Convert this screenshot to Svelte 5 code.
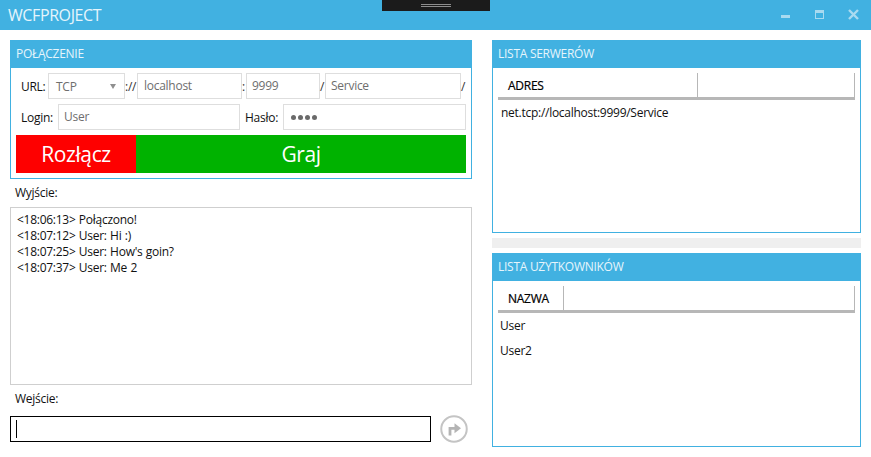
<script>
  const log = ['<18:06:13> Połączono!', '<18:07:12> User: Hi :)', "<18:07:25> User: How's goin?", '<18:07:37> User: Me 2'];
</script>

<div class="win">
  <header class="title">
    <span class="name">WCFPROJECT</span>
    <div class="controls">
      <svg width="11" height="11" viewBox="0 0 11 11"><rect x="1" y="6" width="9" height="3" fill="#a9daf0"/></svg>
      <svg width="11" height="11" viewBox="0 0 11 11"><rect x="1.5" y="1.5" width="8" height="8" fill="none" stroke="#a9daf0"/><rect x="1" y="1" width="9" height="3" fill="#a9daf0"/></svg>
      <svg width="11" height="11" viewBox="0 0 11 11"><path d="M1 1l9 9M10 1l-9 9" stroke="#a9daf0" stroke-width="2.4" fill="none"/></svg>
    </div>
  </header>
  <div class="notch"><i></i><i></i></div>

  <main>
    <section class="left">
      <div class="panel conn">
        <h2>POŁĄCZENIE</h2>
        <div class="form">
          <div class="row r1">
            <label for="proto" class="lurl">URL:</label>
            <div class="select" id="proto">TCP<span class="caret"></span></div>
            <span class="sep s1">://</span>
            <div class="field host">localhost</div>
            <span class="sep s2">:</span>
            <div class="field port">9999</div>
            <span class="sep s3">/</span>
            <div class="field svc">Service</div>
            <span class="sep s4">/</span>
          </div>
          <div class="row r2">
            <span class="llogin">Login:</span>
            <div class="field login">User</div>
            <span class="lpass">Hasło:</span>
            <div class="field pass"><b></b><b></b><b></b><b></b></div>
          </div>
          <div class="btns">
            <div class="btn red">Rozłącz</div>
            <div class="btn green">Graj</div>
          </div>
        </div>
      </div>

      <div class="cap out">Wyjście:</div>
      <div class="log">
        {#each log as line}<div>{line}</div>{/each}
      </div>
      <div class="cap in">Wejście:</div>
      <div class="send">
        <div class="input"><span class="cursor"></span></div>
        <svg class="go" width="28" height="28" viewBox="0 0 28 28">
          <circle cx="14" cy="14" r="12.75" fill="#fff" stroke="#c4c4c4" stroke-width="2"/>
          <path d="M10 20.5v-7.2h5.5" fill="none" stroke="#b4b4b4" stroke-width="2.8"/>
          <path d="M14.5 8.3l6.5 5-6.5 5z" fill="#b4b4b4"/>
        </svg>
      </div>
    </section>

    <section class="right">
      <div class="panel list top">
        <h2>LISTA SERWERÓW</h2>
        <div class="body">
          <div class="thead"><div class="th c1">ADRES</div><div class="th rest"></div></div>
          <div class="addr">net.tcp://localhost:9999/Service</div>
        </div>
      </div>
      <div class="split"></div>
      <div class="panel list">
        <h2>LISTA UŻYTKOWNIKÓW</h2>
        <div class="body">
          <div class="thead"><div class="th c2">NAZWA</div><div class="th rest"></div></div>
          <div class="user first">User</div>
          <div class="user">User2</div>
        </div>
      </div>
    </section>
  </main>
</div>

<style>
  :global(body) { margin: 0; background: #fff; }
  .win {
    position: relative; width: 871px; height: 457px; overflow: hidden; background: #fff;
    font-family: "Open Sans", "Noto Sans", sans-serif; font-size: 12px; color: #111;
    letter-spacing: -0.27px;
  }
  .title { height: 30px; background: #41b1e1; display: flex; align-items: center; justify-content: space-between; padding: 0 12px 0 8px; box-sizing: border-box; }
  .name { color: #e6f5fc; font-size: 16px; letter-spacing: -0.4px; }
  .controls { display: flex; gap: 23px; margin-top: -1px; }
  .controls svg { display: block; }
  .notch { position: absolute; left: 382px; top: 0; width: 108px; height: 11px; background: #1b1b1b; display: flex; flex-direction: column; align-items: center; padding-top: 4px; box-sizing: border-box; gap: 1px; }
  .notch i { display: block; width: 30px; height: 1px; background: #8d8d8d; }

  main { display: flex; gap: 20px; padding: 10px 10px 0; height: 417px; box-sizing: border-box; }
  .left { width: 462px; display: flex; flex-direction: column; }
  .right { width: 369px; display: flex; flex-direction: column; }

  .panel { border: 1px solid #41b1e1; box-sizing: border-box; display: flex; flex-direction: column; }
  .panel h2 { margin: -1px -1px 0; height: 28px; background: #41b1e1; color: #e6f5fc; font-size: 12px; font-weight: 400; line-height: 28px; padding-left: 6px; }

  .conn { height: 139px; }
  .form { padding: 5px 5px 0; display: flex; flex-direction: column; gap: 5px; }
  .row { display: flex; height: 26px; align-items: center; }
  .field, .select { height: 26px; box-sizing: border-box; border: 1px solid #dedede; color: #6e6e6e; line-height: 23px; padding-left: 5px; background: #fff; flex: none; }
  .lurl { margin-left: 5px; width: 29px; }
  .select { width: 77px; position: relative; padding-left: 7px; line-height: 25px; }
  .caret { position: absolute; right: 8px; top: 10px; border: 3.5px solid transparent; border-top: 5px solid #8f8f8f; border-bottom: 0; }
  .sep { flex: none; color: #333; }
  .s1 { width: 12px; }
  .host { width: 105px; padding-left: 6px; }
  .s2 { width: 4px; }
  .port { width: 74px; }
  .s3 { width: 5px; }
  .svc { width: 136px; }
  .s4 { width: 5px; }
  .llogin { margin-left: 5px; width: 37px; }
  .login { width: 182px; }
  .lpass { margin-left: 5px; width: 38px; }
  .pass { width: 183px; display: flex; gap: 2px; align-items: center; padding-left: 7px; }
  .pass b { width: 5px; height: 5px; border-radius: 50%; background: #6a6a6a; }

  .btns { display: flex; height: 38px; color: #fff; font-size: 21px; letter-spacing: -0.4px; }
  .btn { display: flex; align-items: center; justify-content: center; }
  .red { width: 120px; background: #fe0000; }
  .green { flex: 1; background: #00b200; }

  .cap { height: 14px; line-height: 14px; padding-left: 5px; }
  .out { margin-top: 7px; }
  .log { margin-top: 7px; height: 178px; box-sizing: border-box; border: 1px solid #cfcfcf; padding: 4px 6px; line-height: 16px; word-spacing: 0.5px; }
  .in { margin-top: 7px; }
  .send { margin-top: 9px; display: flex; align-items: center; gap: 9px; }
  .input { width: 421px; height: 26px; box-sizing: border-box; border: 1px solid #000; display: flex; align-items: center; padding-left: 5px; }
  .cursor { width: 1px; height: 18px; background: #000; }
  .go { flex: none; }

  .list { flex: 1; }
  .list.top { flex: none; height: 193px; }
  .split { height: 10px; margin: 5px 0; background: #efefef; flex: none; }
  .body { padding: 5px 5px 0; display: flex; flex-direction: column; }
  .thead { display: flex; height: 27px; box-sizing: border-box; border-bottom: 3px solid #b7b7b7; }
  .th { height: 24px; line-height: 25px; border-right: 1px solid #b7b7b7; box-sizing: border-box; font-weight: 500; color: #000; -webkit-text-stroke: 0.2px #000; }
  .c1 { width: 200px; padding-left: 10px; }
  .c2 { width: 66px; padding-left: 10px; }
  .rest { flex: 1; }
  .addr { margin-top: 5px; padding-left: 3px; line-height: 16px; }
  .user { padding-left: 2px; line-height: 16px; margin-top: 9px; }
  .user.first { margin-top: 5px; }
</style>
